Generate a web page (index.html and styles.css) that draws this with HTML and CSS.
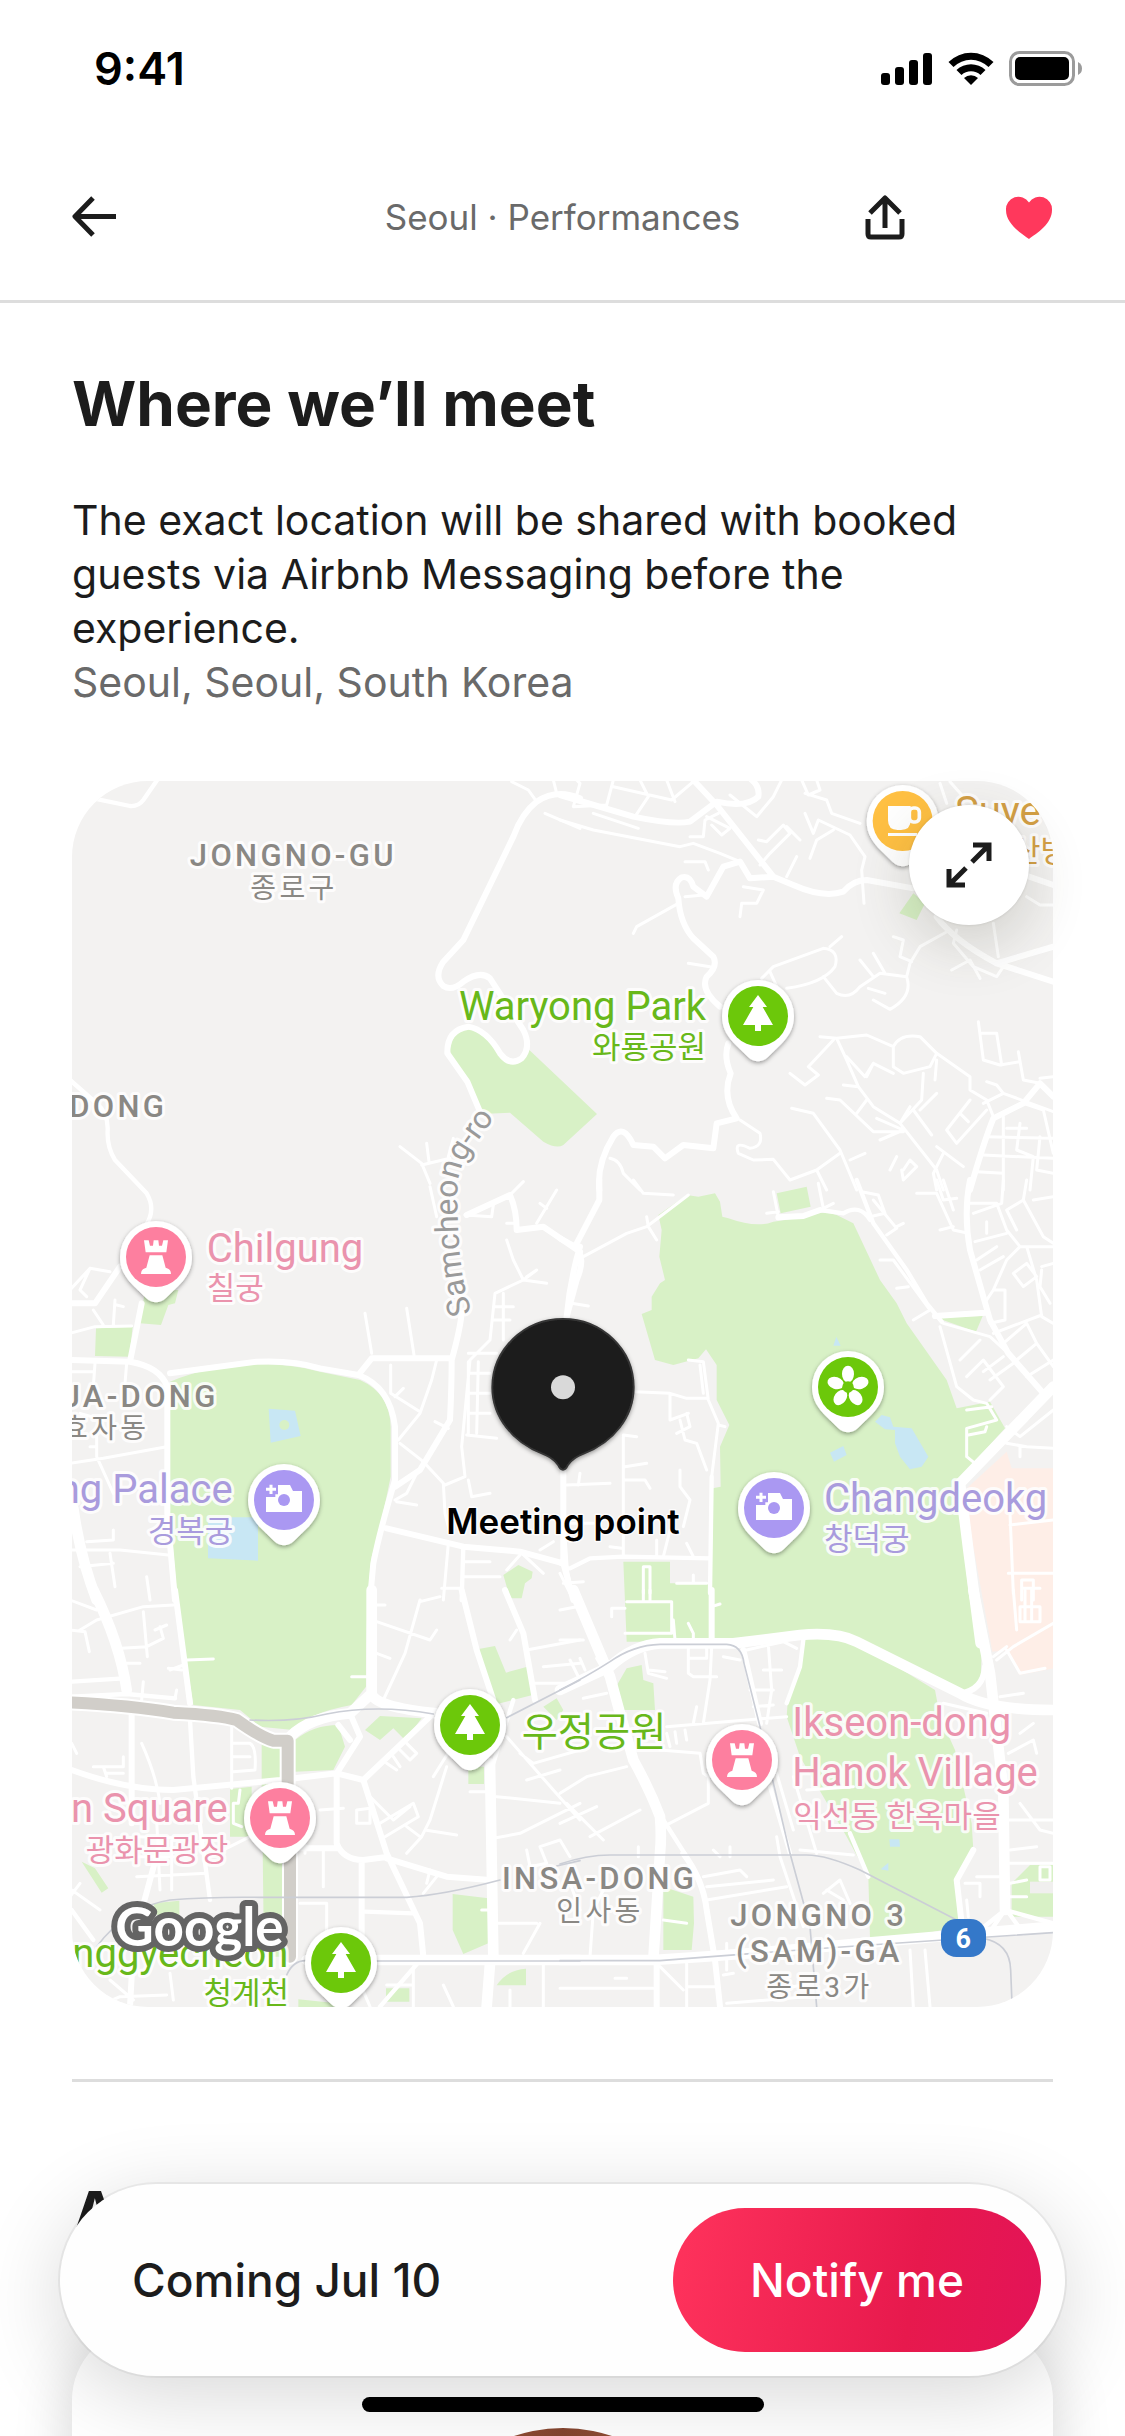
FILE: index.html
```
<!DOCTYPE html>
<html lang="en">
<head>
<meta charset="utf-8">
<meta name="viewport" content="width=device-width, initial-scale=1">
<title>Seoul · Performances</title>
<link rel="stylesheet" href="styles.css">
</head>
<body>
<div class="screen">
  <div class="status">
    <span class="time">9:41</span>
    <div class="status-icons">
      <svg width="52" height="34" viewBox="0 0 52 34" aria-hidden="true">
        <rect x="0" y="21" width="9" height="12" rx="3"/><rect x="14" y="15" width="9" height="18" rx="3"/><rect x="28" y="8" width="9" height="25" rx="3"/><rect x="42" y="1" width="9" height="32" rx="3"/>
      </svg>
      <svg width="46" height="34" viewBox="0 0 46 34" aria-hidden="true">
        <path d="M0.500 10 A32 32 0 0 1 45.500 10 L40.500 15 A25 25 0 0 0 5.500 15Z"/>
        <path d="M8.500 18 A21 21 0 0 1 37.500 18 L32.500 23 A14 14 0 0 0 13.500 23Z"/>
        <path d="M16 26 A10.500 10.500 0 0 1 30 26 L23 33Z"/>
      </svg>
      <svg width="74" height="36" viewBox="0 0 74 36" aria-hidden="true">
        <rect x="1.500" y="1.500" width="63" height="32" rx="9" fill="none" stroke="#9b9b9b" stroke-width="3"/>
        <rect x="6" y="6" width="54" height="23" rx="5"/>
        <path d="M69 11 Q73 13 73 17.500 Q73 22 69 24Z" fill="#9b9b9b"/>
      </svg>
    </div>
  </div>

  <header class="nav">
    <button class="icon-button" aria-label="Back">
      <svg width="48" height="48" viewBox="0 0 48 48" class="line"><path d="M21 5 L3 23.500 L21 42 M3 23.500 H44"/></svg>
    </button>
    <p class="nav-title">Seoul · Performances</p>
    <div class="nav-actions">
      <button class="icon-button" aria-label="Share">
        <svg width="48" height="48" viewBox="0 0 48 48" class="line"><path d="M24 35 V6 M9 20 L24 5 L39 20 M7 26 V41 Q7 44 10 44 H38 Q41 44 41 41 V26"/></svg>
      </button>
      <button class="icon-button" aria-label="Saved">
        <svg width="48" height="48" viewBox="0 0 48 48"><path fill="#ff385c" d="M24 46 C16 40 1 31 1 17 A12.500 12.500 0 0 1 24 9.500 A12.500 12.500 0 0 1 47 17 C47 31 32 40 24 46Z"/></svg>
      </button>
    </div>
  </header>

  <main>
    <section class="meet">
      <h2>Where we’ll meet</h2>
      <p class="copy">The exact location will be shared with booked guests via Airbnb Messaging before the experience.</p>
      <p class="place">Seoul, Seoul, South Korea</p>

      <div class="map">
        <svg class="map-canvas" viewBox="0 0 2943 3678" role="img" aria-label="Map of the meeting area in Seoul">
          <defs>
            <filter id="drop" x="-30%" y="-30%" width="160%" height="160%"><feDropShadow dx="0" dy="5" stdDeviation="6" flood-color="#000" flood-opacity=".38"/></filter>
            <g id="pin"><path filter="url(#drop)" fill="#fff" d="M-108 0 A108 108 0 0 1 108 0 C108 40 88 66 66 88 L30 123 Q0 149 -30 123 L-66 88 C-88 66 -108 40 -108 0Z"/></g>
            <g id="park"><use href="#pin"/><circle r="90" fill="#6cc80a"/><path fill="#fff" d="M0 -63 L27 -27 H14 L45 27 H9 V45 H-9 V27 H-45 L-14 -27 H-27Z"/></g>
            <g id="castle"><use href="#pin"/><circle r="90" fill="#fd7f9f"/><path fill="#fff" d="M-36 -50 H-22 L-18 -34 H-9 L-7 -50 H7 L9 -34 H18 L22 -50 H36 L31 -14 H-31Z M-19 -5 H19 L29 32 Q45 36 45 51 H-45 Q-45 36 -29 32Z"/></g>
            <g id="camera"><use href="#pin"/><circle r="90" fill="#aa98f2"/><path fill="#fff" d="M-54 36 V-9 H-26 V-17 H-18 V-45 H18 L27 -27 H54 V36Z"/><circle r="18" fill="#aa98f2"/><path fill="none" stroke="#fff" stroke-width="9" d="M-54 -32 H-24 M-39 -46 V-18"/></g>
            <g id="flower"><use href="#pin"/><circle r="90" fill="#6cc80a"/><g fill="#fff"><ellipse cy="-39" rx="18" ry="25"/><ellipse cy="-39" rx="18" ry="25" transform="rotate(72)"/><ellipse cy="-39" rx="18" ry="25" transform="rotate(144)"/><ellipse cy="-39" rx="18" ry="25" transform="rotate(216)"/><ellipse cy="-39" rx="18" ry="25" transform="rotate(288)"/></g><circle r="17" fill="#6cc80a"/></g>
            <g id="cafe"><use href="#pin"/><circle r="90" fill="#ffc043"/><path fill="#fff" d="M-44 -45 H24 V-2 Q24 27 -5 27 H-15 Q-44 27 -44 -2Z M-44 36 H44 V45 H-44Z"/><rect x="20" y="-39" width="30" height="42" rx="12" fill="none" stroke="#fff" stroke-width="11"/></g>
          </defs>
          <rect width="2943" height="3678" fill="#f3f2f1"/>

          <!-- parks, water and the hospital block -->
          <g transform="translate(-36 -33)"><path class="green" d="M1170 840 Q1180 775 1220 778 Q1270 780 1300 830 Q1330 880 1355 878 Q1395 870 1408 840 L1611 1032 L1510 1125 Q1490 1138 1450 1115 L1350 1028 L1265 1032 L1222 940 L1180 885Z"/></g>
          <g transform="translate(1464 -33)"><path class="green" d="M1060 370 L1095 400 L1070 450 L1018 430Z"/></g>
          <g transform="translate(-36 1197)">
            <path class="green" d="M330 605 Q450 555 590 552 Q700 552 780 575 L900 600 Q990 640 992 740 V890 Q960 1050 935 1130 Q918 1250 918 1520 L875 1575 Q740 1600 700 1650 L600 1640 L540 1590 L400 1575 Q370 1400 350 1230 L330 1000Z"/>
            <path class="green" d="M255 330 H355 L345 370 L325 375 L303 435 L240 430Z M108 445 L218 440 L208 530 L105 528Z M1330 1185 L1375 1155 L1418 1175 L1415 1195 L1395 1210 L1385 1255 H1350Z"/>
            <path class="water" d="M626 686 L705 692 L722 768 L632 788Z M444 1012 H594 V1142 L444 1135Z"/><circle class="green" cx="673" cy="735" r="15"/>
          </g>
          <g transform="translate(1464 1197)">
            <path class="green" d="M295 105 L380 45 L415 50 L465 40 L480 65 L487 110 L505 115 Q590 145 640 125 L740 110 Q790 90 830 105 L880 130 L960 300 L1010 370 L1040 430 L1160 600 L1190 685 L1290 665 L1335 745 L1230 860 L1190 900 L1225 1230 L1265 1410 L1262 1500 Q1250 1535 1205 1535 L880 1385 Q800 1340 720 1355 L460 1385 H200 L190 1145 H330 V1210 H455 L458 925 L482 920 L480 800 L508 735 L470 660 V555 L438 508 L415 535 L340 555 L285 540 L245 402 L275 390 V350 L300 310 L315 300 L298 230 L305 150Z"/>
            <path class="green" d="M650 40 L740 20 L752 80 L662 100Z M1125 412 L1268 408 L1248 455Z"/>
            <path class="water" d="M829 470 L842 497 H820Z M945 725 L965 705 L990 712 L1000 740 L1055 745 L1105 830 L1085 860 L1050 868 L1020 830 L1005 790 V750 L975 748Z M810 818 L850 798 L860 825 L822 845Z"/>
            <path class="peach" d="M1340 815 L1355 865 H1480 V1465 L1378 1485 L1345 1410 L1297 1415 L1240 1100 L1215 930Z"/>
          </g>
          <g transform="translate(-36 2427)"><path class="green" d="M605 460 H665 V590 H605Z M705 450 Q760 405 835 405 L855 470 L820 540 L705 545Z M510 597 L575 590 V740 H510Z M607 700 H675 V1100 H612Z M915 420 L960 378 L1085 385 L1035 450 L1000 415 L960 450Z M1252 178 L1305 168 L1338 248 L1402 230 L1418 315 L1300 345Z M1225 530 H1272 V582 H1225Z M1178 912 L1285 925 V1060 L1210 1092 L1178 1020Z M1310 1186 Q1340 1140 1398 1136 V1186Z M978 1195 H1048 V1235 H978Z M65 815 L105 835 L145 895 L125 908Z M280 940 L358 932 V990 L290 975Z M715 1228 L830 1240 V1252 H715Z M1450 350 L1490 325 L1510 360 L1490 390Z"/></g>
          <g transform="translate(1464 2427)">
            <path class="green" d="M730 140 L880 150 L1125 300 L1140 380 L1185 480 L1235 700 L1240 780 L1190 870 L1195 1010 L1100 1030 L930 1045 L925 860 L860 740 L790 620 L720 500 L680 380 L685 310 L720 220Z M200 235 L245 225 L250 270 L280 280 L285 360 H190 L168 290Z M310 890 L400 920 L402 1000 L395 1080 H310Z M1355 880 L1410 825 H1480 V980 H1355Z"/>
            <path class="water" d="M988 748 H1018 L1020 770 H990Z M962 838 L985 818 V842Z"/>
            <rect x="1410" y="875" width="70" height="35" fill="#f0efee"/>
          </g>

          <!-- streets -->
          <g class="roads">
            <g transform="translate(-36 -33)">
              <path class="w2" d="M100 85 L210 108 Q235 110 250 90 L295 25 M30 930 L110 1000 Q145 1030 143 1080 Q140 1130 165 1170 L260 1270 Q290 1320 255 1370"/>
              <path class="w3" d="M1560 85 Q1490 55 1430 95 Q1385 130 1360 200 L1210 510 L1150 575 Q1120 620 1150 648 Q1175 665 1210 635 Q1260 600 1290 625 L1390 780 Q1415 830 1385 865 Q1350 890 1320 850 Q1280 780 1225 770 Q1160 780 1162 850 L1222 935 L1262 1030"/>
              <path class="w1" d="M1355 35 L1405 60 L1430 95 M1480 30 L1490 70 M1455 130 L1560 175 M1020 1130 L1085 1180 L1110 1240 M1085 1185 L1170 1165 M1100 1120 L1107 1175 M1180 1105 L1165 1160"/>
            </g>
            <g transform="translate(1464 -33)">
              <path class="w3" d="M0 75 L220 140 Q340 165 390 155 L470 95 Q560 115 595 80 Q600 50 575 30 M400 30 L470 105 L640 320 L700 345 Q790 385 850 365 Q880 330 920 330 L1060 355 M640 320 L570 325 L540 275 L490 290 L440 380 L400 350 Q390 315 365 322 Q335 340 355 385 Q360 460 400 505 L460 560 Q475 590 440 620 Q420 660 480 710 M505 820 Q490 860 512 910 Q485 980 530 1045 L470 1060 L460 1135 L370 1125 L315 1165 L280 1130 L220 1125 Q190 1060 160 1100 Q110 1180 118 1260"/>
              <path class="w3" d="M1130 440 Q1180 510 1310 580 L1480 635 M1310 580 L1480 530 M1350 300 L1480 345"/>
              <path class="w3" d="M1440 940 L1390 1000 L1300 1045 Q1270 1120 1230 1260 M1440 940 L1480 980"/>
              <path class="w1" d="M50 30 L60 40 L40 110 L140 105 L160 30 M0 150 L100 180 L360 230 L400 220 L480 250 L540 275 M100 130 L235 175 M160 50 L335 90 L400 35 M320 30 L345 95 M240 30 L265 80 L225 140 M475 130 L435 150 L430 200 L390 200 M440 140 L510 175 L485 195 L455 165 M510 75 L590 140 L640 80 L665 30 M595 210 L620 215 L670 165 L690 190 L630 250 L600 285 M680 170 L720 210 M725 30 L745 75 L780 60 L770 30 M735 130 L760 190 L775 150 L870 195 L915 260 L905 300 L912 400 M735 70 L800 90 L815 130 L900 160 M750 265 L770 210 L820 180 M680 320 L710 260 M355 400 L230 470 L220 490 M375 380 L430 375 M550 350 L610 360 L590 400 L545 400 L540 440 M375 275 L435 275 L445 300 M385 580 L450 590 M605 625 L640 590 L790 535 Q840 540 825 590 Q790 640 680 655 M630 605 L650 650 M810 530 L845 500 M790 620 L830 670 Q870 690 900 650 L960 610 L1040 620 Q1060 680 990 718 L940 690 M900 570 L940 620 M940 550 L975 610 M925 655 L975 670 M1170 480 L1080 530 L1050 580 L1040 620 M1000 500 L1030 510 L1020 560 L1055 575 M1190 480 L1180 520 L1240 590 L1310 620 L1330 590 M1175 600 L1230 570 L1260 625 M1300 460 L1315 560 M1400 380 L1440 405 H1480 M1140 40 L1160 100 M1170 35 L1210 80"/>
              <path class="w1" d="M780 800 L830 805 L860 870 L895 950 L940 1010 L1020 1060 L1130 1200 L1150 1260 M830 805 L920 795 L1000 830 Q1020 790 1080 800 L1130 850 L1230 920 L1230 960 L1280 990 L1300 1040 M1000 830 V890 L1030 910 L1110 890 L1130 850 M1130 870 L1125 930 M920 920 L940 880 L1000 910 M860 860 L915 920 L940 880 M820 810 L745 890 L775 915 L735 945 L690 910 M850 945 L895 950 M800 985 L840 990 L940 1085 L1030 1085 M920 990 L890 1030 M950 1045 L1030 1080 L960 1110 M1050 1010 L1020 1060 L1085 990 L1090 910 M1060 1020 L1115 1095 M1130 970 L1080 1020 M695 1015 L760 1030 L840 1140 L890 1260 M540 1050 L600 1090 Q610 1130 570 1135 Q520 1110 535 1150 L580 1170 L640 1168 L690 1230 L770 1200 L840 1150 M870 1170 L915 1150 M770 1200 L800 1260 M1255 755 L1270 870 L1320 885 L1380 875 M1265 790 L1310 790 L1325 885 M1375 845 L1390 930 L1440 940 M1440 925 L1480 920 M1230 990 L1160 1080 L1190 1120 L1280 1020 M1200 1030 L1225 1055 M1280 935 L1310 945 L1330 970 L1480 1025 M1330 970 L1270 1000 M1390 1000 L1450 1020 L1480 1150 M1330 1040 V1260 M1280 1100 L1480 1105 M1270 1155 L1480 1165 M1250 1205 L1330 1210 M1380 1060 L1370 1140 L1420 1160 L1410 1260 M1440 1100 L1430 1200 L1480 1210 M1340 1075 H1400 M990 1200 L1010 1160 M1030 1200 L1050 1170 L1070 1190 L1030 1230 L1025 1200 M1150 1150 L1120 1210 L1130 1260 M1130 1130 L1210 1190 M150 1165 Q180 1170 190 1210 L240 1260"/>
            </g>
            <g transform="translate(-36 1197)">
              <path class="w3" d="M30 370 L105 370 L180 260 M245 370 L210 545 M30 540 L210 545 Q300 560 322 620 V1000 L345 1260 M1205 400 Q1200 450 1175 540 Q1175 620 1170 720 L1080 870 L1005 920 M330 580 L590 545 Q700 540 780 565 L895 585 Q990 620 1005 740 V900 Q960 1050 940 1150 L930 1260 M980 1045 L1210 1100 L1380 1115 L1510 1150 M1170 535 H935 L895 585 M1220 105 L1350 45 Q1370 90 1370 150 L1450 140 L1560 215 M1560 200 Q1530 300 1520 410 M1510 870 V1150 L1540 1260"/>
              <path class="w4" d="M40 985 Q60 1130 110 1260"/>
              <path class="w2" d="M1210 1100 L1205 1260"/>
              <path class="w1" d="M30 460 L105 440 L215 438 M100 390 L130 435 M165 360 L160 435 M170 375 L190 380 M30 330 L90 265 L150 275 M90 265 L60 330 L80 350 M30 575 H100 M105 550 L100 620 M200 550 L195 610 M30 850 L130 835 L320 800 M110 770 V830 L160 940 M90 800 H110 M60 700 L130 720 M30 1110 L180 1110 L325 1125 M150 1120 L165 1220 M60 1160 L160 1150 M260 1190 L270 1260 M80 1085 L160 1080 V1050 M915 400 L935 520 M1040 385 L1062 525 M992 555 V640 L1080 695 M1130 540 L1115 600 L1080 700 L1015 780 M1005 650 L1030 625 M1020 790 L1090 845 L1150 910 L1155 1000 L1170 1060 M1155 915 L1215 890 L1205 800 L1230 540 L1290 480 L1305 340 L1390 300 L1460 310 M1225 545 V760 M1255 545 L1250 760 M1225 580 H1290 M1225 640 H1290 M1225 700 H1290 M1220 765 L1310 775 M1225 520 H1310 M1340 180 L1360 240 L1390 300 L1430 270 L1400 290 M1340 130 H1370 M1300 380 H1360 M1300 420 H1350 M1330 340 V480 M1430 130 L1490 30 M1440 70 L1460 85 M1215 105 L1295 110 L1300 75 M1350 45 L1390 5 M1110 20 L1130 110 M1125 725 L1165 745 M1005 960 L1040 940 L1070 880 M1010 965 L1070 975 M1225 900 L1235 950 L1290 940 M1215 1145 H1290 M1210 1190 L1320 1190 M1165 1090 L1150 1260 M1145 1225 H1200 M1380 1115 L1450 1180 M1440 1110 L1480 1085 M1340 1170 L1380 1125"/>
            </g>
            <g transform="translate(1464 1197)">
              <path class="w3" d="M118 0 V60 L45 200 Q80 230 50 300 L20 410 M0 175 L45 200"/>
              <path class="w3" d="M1230 0 Q1210 100 1230 210 L1290 420 L1345 520 L1450 640 M655 112 L730 108 L780 90 M1125 408 L1275 398"/>
              <path class="w4" d="M1480 620 L1200 910 L1225 1110 L1262 1390"/>
              <path class="w2" d="M10 870 V1020 L20 1170 L35 1240 M30 1165 L90 1135 L190 1130 L450 1135 M0 1150 L20 1160 M455 890 L450 1240 M890 0 L940 130 L1040 270 L1100 370 L1145 425 M780 90 L850 100 Q900 70 930 120"/>
              <path class="w1" d="M70 230 L200 160 L260 140 Q300 110 385 45 M260 110 L265 140 L290 180 M220 0 L250 40 L340 45 M35 370 L85 378 M225 635 L330 640 L380 655 L440 655 M330 640 V720 L385 700 M360 720 L375 780 L410 790 L440 870 M385 540 L430 545 L445 660 L475 730 L455 890 M420 555 L430 640 M475 735 L495 740 M380 700 L390 740 L350 760 M190 770 V1130 M195 860 L260 850 M20 915 L150 910 M60 880 L55 915 M195 900 L255 900 L270 925 M190 765 L230 770 M360 870 V920 L390 960 L370 1040 M20 1030 L100 1030 M150 1100 L185 1105 M330 1050 L310 1130 M290 1080 V1130 M250 1240 V1160 H270 V1240 M350 1210 H440 M400 1185 V1210 M0 1180 L30 1240 M10 1210 L70 1205 M380 1090 L400 1130 M640 35 L655 110 M620 100 L655 95 M775 10 L790 85 L820 70 M905 35 L955 45 L975 100 L930 110 M940 60 L1010 145 L980 165 M1010 140 L1030 130 M960 240 H1000 L1110 390 L1060 420 M1010 325 L1045 320 M1140 440 L1190 620 L1240 660 M1150 430 L1290 470 L1345 520 M1200 540 L1260 480 M1220 590 L1270 540 L1330 620 L1290 660 M1270 575 L1330 530 M1290 600 L1360 550 M1240 660 L1280 670 L1310 720 L1220 745 V830 L1245 850 M1220 690 L1295 680 M1225 765 L1275 755 L1280 740 M1340 740 L1380 770 L1480 690 M1340 790 L1400 800 L1480 805 M1380 800 V830 M1345 775 L1400 720"/>
              <path class="w1" d="M1070 40 H1130 L1180 150 L1225 160 M1130 0 L1150 60 L1190 55 M1150 0 L1180 90 M1220 70 L1310 70 L1340 150 L1380 200 H1480 M1330 0 L1325 70 L1240 100 M1400 0 L1390 60 L1340 90 L1370 150 M1420 60 L1480 50 M1390 60 L1450 170 L1480 190 M1380 200 L1340 240 L1300 330 L1335 330 L1335 420 L1290 430 M1400 200 L1430 300 L1445 410 L1480 430 M1245 185 L1340 160 M1250 240 L1310 200 M1260 270 L1330 230 M1280 360 L1300 330 M1360 280 L1400 250 L1430 290 L1390 320Z M1445 260 L1480 250 M1445 270 L1440 320 L1470 370 M1300 460 L1445 405 M1330 490 L1400 430 L1430 490 L1480 560 M1370 540 L1430 490 M1400 590 L1480 540 M1280 125 V160 M1140 150 L1180 140 M1350 1000 L1360 1240 M1345 1180 H1480 M1350 1035 L1480 1020 M1385 1260 V1200 H1420 V1260 M1385 1225 H1440"/>
            </g>
            <g transform="translate(-36 2427)">
              <path class="w4" d="M100 0 Q180 160 200 300 M935 0 V310 M690 440 Q750 380 870 370 L935 310 Q940 350 1130 370 M1300 1100 L1290 520 M740 1110 H1560 M1290 1120 L1280 1250"/>
              <path class="w3" d="M345 0 L390 340 M35 540 Q200 600 340 600 L660 570 L830 550 L910 570 L1120 370 M1205 0 L1250 180 L1300 330 M1335 0 L1390 130 L1425 330 M910 570 L980 790 L1080 1000 L1090 1100 M980 805 L1160 860 L1290 870 M830 550 V760 Q850 810 910 810 L985 800 M905 810 V1100 M215 370 V700 M700 775 H830 M870 370 L900 440 L830 550 M210 1250 L215 1160 L240 980 L300 760 M835 405 L870 450"/>
              <path class="w2" d="M35 275 L190 265 M35 320 L200 312 L345 325 M390 390 L400 560 L430 780 L450 930 M915 965 L1060 970 M1300 520 L1360 330 M1090 1100 L960 1250 M35 960 L100 1050"/>
              <path class="w1" d="M30 30 L110 60 M30 120 L75 125 L88 185 M60 120 L110 90 L250 50 L340 45 M250 65 L262 200 M185 175 L260 170 L310 145 L300 110 M285 120 L320 105 M200 220 H240 M325 235 L365 240 M330 240 L370 225 M380 210 L460 207 M875 260 H920 M250 275 L245 330 M345 325 L350 300 M245 460 Q290 560 300 640 M515 410 V595 M520 460 H570 Q590 470 585 540 L520 545 M520 500 H570 M100 530 H190 V500 M140 550 H190 M130 530 L140 560 M35 460 L50 490 M290 690 L300 900 M230 740 L400 745 M225 800 H340 M230 860 L440 850 M335 750 V900 M540 600 L535 640 H520 V700 L545 710 M450 800 L570 740 M950 95 L1110 150 L1130 120 M1080 30 L1035 190 L970 330 M1080 35 L1140 20 M940 45 H975 M950 190 L990 205 M1130 400 L1160 420 M980 520 L1010 540 M1000 500 L1020 530 M1020 480 L1050 510 L1070 490 L1040 460 M850 655 L780 660 M735 790 V680 M790 780 V890 M720 940 H800 V1030 M920 610 L1000 690 L1050 650 M890 660 L930 655 V700 L890 700Z M960 700 L1060 640 L1075 680 L975 740 M1040 710 L1080 740 M1160 530 L1110 690 L1085 740 L1040 790 M1095 720 L1190 735 M1110 840 L1100 880 M1120 560 L1170 480 M1310 620 L1500 640 M1300 745 L1380 730 L1560 640 M1340 440 L1480 600 L1560 690 M1380 490 L1420 520 L1560 480 M1400 570 L1500 540 M1400 180 L1560 150 M1350 150 L1370 120 M1420 280 H1560 M1450 230 L1560 220 M1440 1000 L1390 1090 M1310 1000 H1430 M1265 960 H1290 M1130 860 L1090 910 M1400 780 L1410 830 L1460 820 L1440 770 L1500 750 L1530 800 M1230 605 H1290 M900 1180 L930 1250 M1060 1130 V1250 M980 1185 H1060 M1150 1185 L1180 1250 M1450 1120 V1250 M1350 1200 V1250 M110 1250 L180 1220 L320 1215 M150 1170 L220 1230 M330 1150 L340 1230 M35 900 L120 960 M60 880 L30 920"/>
            </g>
            <g transform="translate(1464 2427)">
              <path class="w4" d="M40 0 L150 260 L180 370 L220 510 Q270 600 300 680 Q305 740 300 790 L280 1110 M0 1110 H280 Q600 1090 900 1060 L1480 1010 M0 300 L150 230 Q220 165 300 160 H520 L720 135 Q830 125 890 155 L1200 310 Q1280 360 1480 360 M1240 0 L1290 250 L1330 600 L1335 960"/>
              <path class="w3" d="M455 0 V160 M550 180 L600 400 M290 1110 V1250 M465 1110 L480 1250 M370 790 Q430 870 440 960 L465 1110 M1200 310 Q1270 300 1275 230 M1240 780 L1190 870 L1205 1000"/>
              <path class="w2" d="M730 150 L720 230 L680 340 M870 730 L925 860 M310 690 L380 800 M1335 960 L1480 1000 M1335 960 L1260 1020 M1335 960 L1300 1010 M630 590 L690 790 M1340 960 L1390 1030"/>
              <path class="w1" d="M0 60 L50 50 M0 150 L70 150 M155 80 V55 H195 M200 35 H335 V130 H195 M340 90 L345 150 M385 100 L400 130 V165 M250 0 V30 M270 0 V30 M455 50 L480 42 M560 180 L670 155 L710 175 M30 210 L60 270 M60 205 L75 240 M110 205 L130 240 M70 325 L140 310 M255 190 L265 250 L320 265 M265 240 L315 245 M385 175 V250 L400 260 H470 M385 205 H440 V170 M455 170 L450 270 L430 400 M490 200 L540 210 M570 300 H640 M610 240 H665 M580 350 L640 345 M625 165 L635 300 L620 400 M320 410 L680 380 M320 430 L330 470 M345 425 L350 460 M375 420 L380 450 M410 350 L400 400 M300 480 L420 490 L430 550 L445 560 V640 L310 710 M0 610 L80 560 L200 530 M20 640 L130 750 M0 700 L110 650 M90 740 L240 660 M235 770 V800 M510 770 V800 M460 780 L480 800 M650 740 L660 800 M700 560 L770 790 M740 600 L880 590 M720 780 L880 795 M660 800 L730 1010 M650 550 L700 720 M430 860 L540 840 L560 860 M440 890 L640 870 M440 930 L680 890 M790 910 L840 870 L870 940 M800 900 L850 930 M500 1140 V1060 M310 990 L380 1000 M130 900 L100 960 L90 1100 M30 880 L60 960 M165 1165 H200 M300 1130 L370 1200 M380 1120 V1250 M0 1195 H280 M490 1155 L520 1150 M380 1190 H470 M500 1240 L740 1220 M1050 1080 L1060 1250 M1095 1080 L1110 1250 M640 1200 L760 1180 M1345 690 H1480 M1350 780 L1430 770 M1380 640 L1440 720 L1480 730 M1345 820 H1480 M1350 880 L1400 870 M1350 920 H1400 M1440 830 H1470 V870 H1440Z M1320 320 L1390 310 M1310 210 L1360 170 L1480 100 M1370 120 L1360 0 M1380 50 H1440 V95 H1380Z M1395 0 V90 M1415 0 V90 M1340 180 L1380 250 L1455 235 M1300 200 L1340 170 M1150 340 L1280 370 M1345 490 L1420 450 L1430 490 M1250 860 H1320 M1215 880 H1260 V920 M1220 930 L1225 980 M1380 430 L1420 400"/>
            </g>
          </g>

          <!-- underpass and metro lines -->
          <g transform="translate(-36 2427)">
            <path class="casing" d="M0 336 Q200 345 340 368 Q480 375 530 390 Q600 440 640 452 H683 V600 M690 760 V1100"/>
            <path class="trunk" d="M0 336 Q200 345 340 368 Q480 375 530 390 Q600 440 640 452 H683 V600 M690 760 V1100"/>
            <path class="rail" d="M570 390 Q700 397 800 372 Q950 342 1120 372 M1340 383 L1560 270 M110 1070 Q200 950 330 930 Q450 920 600 922 H1040 Q1150 915 1320 870 M950 1113 H1560 M680 1155 Q700 1110 740 1112 M1490 828 L1560 812"/>
          </g>
          <g transform="translate(1464 2427)">
            <path class="rail" d="M0 300 Q80 260 150 215 Q220 165 300 163 H500 Q545 165 552 220 L600 410 L690 790 L750 1010 L770 1250 M0 822 Q80 795 150 795 H740 Q800 795 900 840 L1190 990 M0 1112 H300 Q700 1080 1150 1050 L1480 1028 M1270 1045 Q1350 1060 1352 1140 L1356 1240"/>
          </g>

          <!-- labels -->
          <g transform="translate(-36 -33)">
            <g class="area"><text x="700" y="288" text-anchor="middle">JONGNO-GU</text><text class="ko" x="702" y="385" text-anchor="middle">종로구</text><text x="322" y="1042" text-anchor="end">DONG</text></g>
          </g>
          <g transform="translate(1464 -33)">
            <g class="park"><text x="438" y="750" text-anchor="end">Waryong Park</text><text class="ko" x="438" y="863" text-anchor="end">와룡공원</text></g>
            <g class="food"><text x="1185" y="165">Suye</text><text class="ko" x="1185" y="275">수연산방</text></g>
          </g>
          <g transform="translate(-36 1197)">
            <path id="street" fill="none" d="M1236 398 C1202 300 1196 200 1194 120 C1190 40 1190 10 1202 -30 C1218 -80 1262 -120 1320 -215"/>
            <text class="street"><textPath href="#street">Samcheong-ro</textPath></text>
            <g class="sight"><text x="440" y="245">Chilgung</text><text class="ko" x="440" y="358">칠궁</text></g>
            <g class="area"><text x="476" y="680" text-anchor="end">JA-DONG</text><text class="ko" x="268" y="775" text-anchor="end">효자동</text></g>
            <g class="palace"><text x="518" y="970" text-anchor="end">ng Palace</text><text class="ko" x="520" y="1085" text-anchor="end">경복궁</text></g>
          </g>
          <g transform="translate(1464 1197)">
            <g class="palace"><text x="792" y="995">Changdeokg</text><text class="ko" x="792" y="1110">창덕궁</text></g>
          </g>
          <g transform="translate(-36 2427)">
            <g class="sight"><text x="503" y="697" text-anchor="end">n Square</text><text class="ko" x="505" y="812" text-anchor="end">광화문광장</text></g>
            <g class="area"><text x="1619" y="897" text-anchor="middle">INSA-DONG</text><text class="ko" x="1620" y="993" text-anchor="middle">인사동</text></g>
            <g class="park"><text class="ko-large" x="1385" y="467">우정공원</text><text x="685" y="1132" text-anchor="end">nggyecheon</text><text class="ko" x="687" y="1243" text-anchor="end">청계천</text></g>
            <text class="google" x="166" y="1068">Google</text>
          </g>
          <g transform="translate(1464 2427)">
            <g class="sight"><text x="697" y="438">Ikseon-dong</text><text x="697" y="588">Hanok Village</text><text class="ko" x="700" y="710">익선동 한옥마을</text></g>
            <g class="area"><text x="776" y="1008" text-anchor="middle">JONGNO 3</text><text x="778" y="1115" text-anchor="middle">(SAM)-GA</text><text class="ko" x="778" y="1220" text-anchor="middle">종로3가</text></g>
            <rect x="1143" y="987" width="135" height="114" rx="46" fill="#3478c9"/><text class="line-number" x="1210" y="1073" text-anchor="middle">6</text>
          </g>

          <!-- places -->
          <use href="#cafe" x="2492" y="120"/>
          <use href="#park" x="2058" y="705"/>
          <use href="#castle" x="252" y="1428"/>
          <use href="#camera" x="636" y="2157"/>
          <use href="#flower" x="2328" y="1818"/>
          <use href="#camera" x="2106" y="2181"/>
          <use href="#park" x="1194" y="2832"/>
          <use href="#castle" x="624" y="3111"/>
          <use href="#park" x="807" y="3546"/>
          <use href="#castle" x="2010" y="2937"/>

          <!-- meeting point -->
          <g transform="translate(1473 1819)">
            <path filter="url(#drop)" fill="#1b1b1b" stroke="#353535" stroke-width="6" d="M0 247 Q-8 247 -14 234 Q-28 212 -62 199 C-150 165 -212 90 -212 0 A212 205 0 0 1 212 0 C212 90 150 165 62 199 Q28 212 14 234 Q8 247 0 247Z"/>
            <circle r="36" fill="#d9d9d9"/>
            <text class="meeting" y="440" text-anchor="middle">Meeting point</text>
          </g>
        </svg>
        <button class="expand" aria-label="Expand map">
          <svg width="48" height="48" viewBox="0 0 48 48"><path d="M27 21 L43 5 M28 4 H44 V20 M21 27 L5 43 M4 28 V44 H20"/></svg>
        </button>
      </div>
    </section>

    <section class="host">
      <h2>Ab</h2>
      <div class="host-card"><div class="avatar"></div></div>
    </section>
  </main>

  <div class="booking-bar">
    <p>Coming Jul 10</p>
    <button class="notify">Notify me</button>
  </div>
  <div class="home-indicator"></div>
</div>
</body>
</html>
```
FILE: styles.css
```
* { box-sizing: border-box; }

body {
  margin: 0;
  background: #fff;
  color: #1c1c1c;
  font-family: Inter, "Noto Sans CJK KR", sans-serif;
}

h2, p { margin: 0; }

button {
  padding: 0;
  border: 0;
  background: none;
  color: inherit;
  font: inherit;
  cursor: pointer;
}

svg { display: block; }

.screen {
  position: relative;
  height: 100vh;
  overflow: hidden;
}

/* Status bar */
.status {
  display: flex;
  align-items: center;
  justify-content: space-between;
  height: 138px;
  padding: 0 42px 0 94px;
  color: #000;
}
.time { font-size: 45px; line-height: 48px; font-weight: 600; }
.status-icons { display: flex; align-items: center; gap: 15px; }

/* Navigation */
.nav {
  display: grid;
  grid-template-columns: 1fr auto 1fr;
  align-items: center;
  height: 165px;
  padding: 0 72px 4px;
  border-bottom: 3px solid #ddd;
}
.icon-button { width: 48px; height: 48px; }
.line path {
  fill: none;
  stroke: #1c1c1c;
  stroke-width: 5;
  stroke-linejoin: round;
}
.nav-title { color: #6a6a6a; font-size: 35px; line-height: 48px; }
.nav-actions { display: flex; justify-content: flex-end; gap: 96px; }

/* Meeting place */
.meet {
  margin: 0 72px;
  padding: 65px 0 72px;
  border-bottom: 3px solid #ddd;
}
h2 { font-size: 62px; line-height: 72px; font-weight: 700; }
.copy, .place { padding-right: 24px; font-size: 41px; line-height: 54px; }
.copy { margin-top: 53px; }
.place { color: #6a6a6a; }

/* Map */
.map { position: relative; margin-top: 72px; }
.map-canvas { width: 100%; height: auto; border-radius: 76px; }
.green { fill: #d8f1c6; }
.water { fill: #c8e7f4; }
.peach { fill: #feeee7; }
.roads path, .casing, .trunk, .rail { fill: none; stroke-linecap: round; stroke-linejoin: round; }
.roads path { stroke: #fff; }
.roads .w1 { stroke-width: 9; }
.roads .w2 { stroke-width: 13; }
.roads .w3 { stroke-width: 18; }
.roads .w4 { stroke-width: 32; }
.casing { stroke: #fff; stroke-width: 48; }
.trunk { stroke: #d1cec9; stroke-width: 36; }
.rail { stroke: #cbced6; stroke-width: 5; }
.map-canvas text {
  font-family: Roboto, "Noto Sans CJK KR", sans-serif;
  font-size: 120px;
  stroke: #fff;
  stroke-opacity: .85;
  stroke-width: 18px;
  stroke-linejoin: round;
  paint-order: stroke;
}
.map-canvas .ko { font-size: 93px; }
.map-canvas .ko-large { font-size: 118px; }
.map-canvas .area text { font-size: 93px; letter-spacing: 10px; fill: #8a8884; font-weight: 500; }
.map-canvas .area .ko { font-size: 84px; font-weight: 400; }
.map-canvas .park text { fill: #68b81a; }
.map-canvas .food text { fill: #d39f45; }
.map-canvas .sight text { fill: #ea93ad; }
.map-canvas .palace text { fill: #a99bdd; }
.map-canvas .street { font-size: 96px; fill: #9a9a9a; }
.map-canvas .line-number { font-size: 81px; font-weight: 700; fill: #fff; stroke: none; }
.map-canvas .google {
  font-family: Lato, sans-serif;
  font-size: 159px;
  font-weight: 700;
  fill: #fff;
  stroke: #646464;
  stroke-opacity: 1;
  stroke-width: 36px;
}
.map-canvas .meeting {
  font-family: Inter, sans-serif;
  font-size: 105px;
  font-weight: 600;
  fill: #000;
  stroke-width: 9px;
}
.expand {
  position: absolute;
  top: 24px;
  right: 24px;
  display: grid;
  place-items: center;
  width: 120px;
  height: 120px;
  border-radius: 50%;
  background: #fff;
  box-shadow: 0 0 3px rgba(0, 0, 0, .12), 0 18px 60px rgba(60, 60, 40, .2);
}
.expand path { fill: none; stroke: #1c1c1c; stroke-width: 5; }

/* Host */
.host { padding: 96px 72px 0; }
.host-card {
  display: flex;
  justify-content: center;
  margin-top: 78px;
  padding: 100px 0 72px;
  border-radius: 72px;
  background: #fff;
  box-shadow: 0 12px 60px rgba(0, 0, 0, .16);
}
.avatar {
  width: 308px;
  height: 308px;
  border-radius: 50%;
  background: linear-gradient(90deg, #a4583c, #84452f 50%, #a4583c);
}

/* Booking bar */
.booking-bar {
  position: absolute;
  right: 60px;
  bottom: 60px;
  left: 60px;
  display: flex;
  align-items: center;
  justify-content: space-between;
  padding: 24px 24px 24px 72px;
  border-radius: 96px;
  background: #fefefe;
  box-shadow: 0 0 0 2px rgba(0, 0, 0, .05), 0 18px 84px rgba(0, 0, 0, .16);
  font-size: 46px;
  font-weight: 500;
}
.notify {
  width: 368px;
  height: 144px;
  border-radius: 72px;
  background: linear-gradient(100deg, #ff335c, #e7194d 65%, #e31358);
  color: #fff;
}
.home-indicator {
  position: absolute;
  bottom: 24px;
  left: 50%;
  width: 402px;
  height: 15px;
  margin-left: -201px;
  border-radius: 8px;
  background: #000;
}
```
